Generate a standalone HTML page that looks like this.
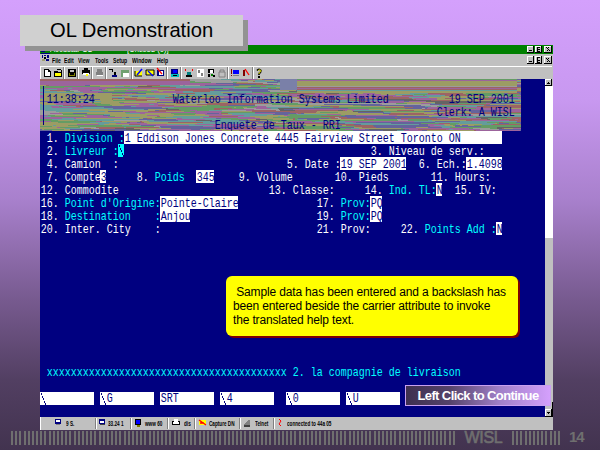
<!DOCTYPE html>
<html><head><meta charset="utf-8">
<style>
*{margin:0;padding:0;box-sizing:border-box}
html,body{width:600px;height:450px;overflow:hidden}
body{position:relative;background:linear-gradient(to bottom,#d4a0fc 0px,#c898f0 100px,#a880cc 200px,#775a8f 300px,#523f62 380px,#42334f 450px);font-family:"Liberation Sans",sans-serif}
.a{position:absolute}
#term{position:absolute;left:40px;top:79px;width:505px;height:338px;background:#000080;overflow:hidden}
.t{position:absolute;height:13px;overflow:visible;white-space:pre}
.t span{display:block;font-family:"Liberation Mono",monospace;font-size:13.5px;line-height:13px;transform:translate(0.8px,0.5px) scaleX(0.74066);transform-origin:0 0;white-space:pre}
.w{color:#fff}.c{color:#00ffff}.n{color:#000080}
.f{background:#fff;color:#000080}
.fc{background:#00ffff;color:#000080}
.mn{position:absolute;top:56px;font-size:8px;line-height:9px;color:#000;font-weight:bold;transform:scaleX(0.64);transform-origin:0 0}
.sep{position:absolute;top:67px;width:2px;height:12px;border-left:1px solid #808080;border-right:1px solid #fff}
.ic{position:absolute}
.tb{position:absolute;top:418px;height:12px;border-left:1px solid #fff}
.tt{position:absolute;top:418.5px;font-size:7.5px;line-height:9px;color:#000;font-weight:bold;transform:scaleX(0.62);transform-origin:0 0;white-space:pre}
.stripes{position:absolute;top:431px;height:14px;background:repeating-linear-gradient(to right,#6f6f6f 0,#6f6f6f 2.08px,transparent 2.08px,transparent 4.1667px)}
</style></head><body>
<!-- window frame -->
<div class="a" style="left:40px;top:45px;width:513px;height:385px;background:#c0c0c0"></div>
<div class="a" style="left:40px;top:45px;width:513px;height:9px;background:#008000"></div>
<div class="a" style="left:50px;top:44.5px;font-size:9px;line-height:9px;color:#fff;white-space:pre;transform:scaleX(0.85);transform-origin:0 0">Accustar OL -</div><div class="a" style="left:127px;top:44.5px;font-size:9px;line-height:9px;color:#fff;white-space:pre;transform:scaleX(0.85);transform-origin:0 0">[Untitled (0)]</div>
<!-- title bar buttons -->
<svg class="a" style="left:527px;top:46px" width="25" height="7" shape-rendering="crispEdges">
<g><rect x="0" y="0" width="7" height="7" fill="#000"/><rect x="0" y="0" width="6" height="6" fill="#fff"/><rect x="1" y="1" width="5" height="5" fill="#c0c0c0"/><rect x="2" y="4" width="3" height="1" fill="#000"/></g>
<g transform="translate(8,0)"><rect x="0" y="0" width="7" height="7" fill="#000"/><rect x="0" y="0" width="6" height="6" fill="#fff"/><rect x="1" y="1" width="5" height="5" fill="#c0c0c0"/><path d="M2 1h3v1h-2v1h2v1h-2v1h2v1h-3z" fill="#000"/></g>
<g transform="translate(17,0)"><rect x="0" y="0" width="8" height="7" fill="#000"/><rect x="0" y="0" width="7" height="6" fill="#fff"/><rect x="1" y="1" width="6" height="5" fill="#c0c0c0"/><path d="M2 1h1v1h1v-1h1v1h-1v1h1v1h1v1h-1v-1h-1v1h-1v-1h1v-1h-1v-1h-1z" fill="#000"/></g>
</svg>
<!-- menubar -->
<svg class="a" style="left:41px;top:51px" width="9" height="12" shape-rendering="crispEdges"><rect x="0" y="0" width="4" height="1" fill="#000080"/><rect x="0" y="2" width="9" height="1" fill="#000080"/><rect x="1" y="4" width="1" height="3" fill="#000080"/><rect x="3" y="4" width="2" height="1" fill="#000080"/><rect x="6" y="4" width="2" height="3" fill="#000080"/><rect x="3" y="6" width="2" height="2" fill="#000"/><rect x="1" y="8" width="3" height="2" fill="#a0a070"/><rect x="5" y="8" width="3" height="2" fill="#000080"/></svg>
<div class="mn" style="left:52px">File</div>
<div class="mn" style="left:64px">Edit</div>
<div class="mn" style="left:78px">View</div>
<div class="mn" style="left:95px">Tools</div>
<div class="mn" style="left:113px">Setup</div>
<div class="mn" style="left:132px">Window</div>
<div class="mn" style="left:157px">Help</div>
<svg class="a" style="left:527px;top:56px" width="25" height="8" shape-rendering="crispEdges">
<g><rect x="0" y="0" width="7" height="8" fill="#000"/><rect x="0" y="0" width="6" height="7" fill="#fff"/><rect x="1" y="1" width="5" height="6" fill="#c0c0c0"/><rect x="2" y="5" width="3" height="1" fill="#000"/></g>
<g transform="translate(8,0)"><rect x="0" y="0" width="7" height="8" fill="#000"/><rect x="0" y="0" width="6" height="7" fill="#fff"/><rect x="1" y="1" width="5" height="6" fill="#c0c0c0"/><path d="M2 1h3v1h-2v2h2v1h-2v1h2v1h-3z" fill="#000"/></g>
<g transform="translate(17,0)"><rect x="0" y="0" width="8" height="8" fill="#000"/><rect x="0" y="0" width="7" height="7" fill="#fff"/><rect x="1" y="1" width="6" height="6" fill="#c0c0c0"/><path d="M2 2h1v1h1v-1h1v1h-1v1h1v1h1v1h-1v-1h-1v1h-1v-1h1v-1h-1v-1h-1z" fill="#000"/></g>
</svg>
<div class="a" style="left:40px;top:66px;width:512px;height:1px;background:#fff"></div>
<!-- toolbar -->
<svg class="a" style="left:40px;top:67px" width="513" height="12" shape-rendering="crispEdges">
<rect x="0" y="0" width="1" height="12" fill="#fff"/>
<g fill="#fff"><rect x="24" y="0" width="1" height="12"/><rect x="38" y="0" width="1" height="12"/><rect x="52" y="0" width="1" height="12"/><rect x="66" y="0" width="1" height="12"/><rect x="92" y="0" width="1" height="12"/><rect x="127" y="0" width="1" height="12"/><rect x="141" y="0" width="1" height="12"/><rect x="188" y="0" width="1" height="12"/><rect x="213" y="0" width="1" height="12"/></g>
<g fill="#808080"><rect x="23" y="0" width="1" height="12"/><rect x="37" y="0" width="1" height="12"/><rect x="51" y="0" width="1" height="12"/><rect x="65" y="0" width="1" height="12"/><rect x="91" y="0" width="1" height="12"/><rect x="126" y="0" width="1" height="12"/><rect x="140" y="0" width="1" height="12"/><rect x="187" y="0" width="1" height="12"/><rect x="212" y="0" width="1" height="12"/></g>
<!-- new -->
<path d="M4 2h5v1h1v1h1v6h-7z" fill="#000"/><path d="M5 3h3v2h2v4h-5z" fill="#fff"/>
<!-- open -->
<rect x="14" y="4" width="4" height="1" fill="#000"/><rect x="14" y="5" width="8" height="5" fill="#000"/><rect x="15" y="6" width="6" height="3" fill="#ffff00"/><rect x="17" y="2" width="4" height="1" fill="#000"/><rect x="21" y="3" width="1" height="2" fill="#000"/>
<!-- save -->
<rect x="28" y="2" width="8" height="8" fill="#000"/><rect x="30" y="3" width="4" height="2" fill="#c0c0c0"/><rect x="29" y="6" width="6" height="3" fill="#808000"/><rect x="30" y="6" width="4" height="2" fill="#000"/>
<!-- print -->
<rect x="42" y="3" width="8" height="4" fill="#000"/><rect x="44" y="1" width="4" height="2" fill="#000"/><rect x="43" y="6" width="6" height="2" fill="#fff"/><rect x="46" y="7" width="2" height="2" fill="#ffff00"/>
<!-- gray -->
<rect x="57" y="2" width="5" height="3" fill="#808080"/><rect x="56" y="5" width="7" height="3" fill="#808080"/><rect x="57" y="8" width="6" height="1" fill="#fff"/>
<!-- connect -->
<rect x="69" y="2" width="4" height="1" fill="#000"/><rect x="72" y="3" width="1" height="2" fill="#000"/><rect x="74" y="5" width="2" height="3" fill="#000"/><rect x="72" y="8" width="5" height="2" fill="#000080"/>
<!-- green -->
<rect x="81" y="3" width="8" height="3" fill="#70a070"/><rect x="81" y="6" width="8" height="4" fill="#fff"/><rect x="81" y="6" width="2" height="4" fill="#70a070"/>
<!-- yellow blue -->
<rect x="95" y="4" width="7" height="5" fill="#ffff00"/><path d="M95 4v5h7" fill="none" stroke="#000" shape-rendering="auto"/><path d="M97 8l5-6" stroke="#0000ff" stroke-width="1.5" shape-rendering="auto"/>
<!-- yellow folder diag -->
<rect x="106" y="3" width="8" height="5" fill="#ffff00"/><path d="M106 3h8v5h-8z" fill="none" stroke="#000" shape-rendering="auto"/><path d="M108 4l5 5" stroke="#0000ff" stroke-width="1.2" shape-rendering="auto"/>
<!-- blue red -->
<rect x="117" y="3" width="7" height="6" fill="#000080"/><rect x="119" y="4" width="4" height="4" fill="#fff"/><path d="M117 1l5 6" stroke="#ff0000" stroke-width="1.2" shape-rendering="auto"/>
<!-- monitor -->
<rect x="131" y="2" width="7" height="6" fill="#000080"/><rect x="133" y="3" width="4" height="3" fill="#0000ff"/><rect x="131" y="7" width="8" height="3" fill="#00c0c0"/><rect x="133" y="8" width="4" height="1" fill="#000"/>
<!-- red corners -->
<rect x="145" y="2" width="1" height="2" fill="#ff0000"/><rect x="152" y="2" width="1" height="2" fill="#ff0000"/><rect x="147" y="5" width="4" height="3" fill="#008080"/><rect x="146" y="8" width="6" height="2" fill="#000"/>
<!-- white floppy -->
<rect x="157" y="2" width="7" height="8" fill="#fff"/><rect x="158" y="3" width="2" height="3" fill="#808080"/><rect x="161" y="6" width="2" height="3" fill="#808080"/>
<!-- black white green -->
<rect x="168" y="2" width="6" height="4" fill="#000"/><rect x="170" y="3" width="3" height="3" fill="#fff"/><rect x="168" y="7" width="2" height="3" fill="#000"/><rect x="171" y="7" width="2" height="2" fill="#008000"/><rect x="173" y="8" width="2" height="2" fill="#000"/>
<!-- gray lock -->
<path d="M179 5h6v5h-6z M180 5v-2h4v2" fill="none" stroke="#808080" shape-rendering="auto"/>
<!-- red ! blue -->
<rect x="191" y="2" width="1" height="5" fill="#800000"/><rect x="191" y="8" width="1" height="1" fill="#800000"/><rect x="193" y="3" width="6" height="4" fill="#0000ff"/><rect x="193" y="8" width="6" height="1" fill="#808080"/>
<!-- dark red -->
<rect x="203" y="3" width="2" height="6" fill="#800000"/><path d="M205 2l4 6" stroke="#ff0000" stroke-width="1.3" shape-rendering="auto"/>
<!-- ? -->
<path d="M217 3.5q2-2.5 4 0q0 2-2 3v1.5" fill="none" stroke="#000" stroke-width="1.6" shape-rendering="auto"/><path d="M218 3.5q1.5-1.5 3 0q0 1.5-2 2.5v1" fill="none" stroke="#ffff00" stroke-width="0.8" shape-rendering="auto"/><rect x="218" y="9" width="2" height="2" fill="#000"/>
</svg>

<div id="term">
<svg class="a" style="left:0;top:0" width="481" height="52" shape-rendering="crispEdges">
<path fill="#9c649c" d="M95 0h20v1h-20zM199 0h18v1h-18zM409 0h7v1h-7zM72 1h55v1h-55zM133 1h2v1h-2zM0 2h5v1h-5zM89 3h3v1h-3zM451 3h4v1h-4zM104 4h72v1h-72zM380 4h25v1h-25zM460 4h8v1h-8zM0 5h12v1h-12zM124 5h12v1h-12zM150 5h43v1h-43zM233 5h4v1h-4zM262 5h9v1h-9zM380 5h39v1h-39zM427 5h54v1h-54zM9 6h36v1h-36zM160 6h5v1h-5zM257 6h31v1h-31zM403 6h28v1h-28zM221 7h5v1h-5zM335 7h2v1h-2zM349 7h12v1h-12zM24 8h73v1h-73zM253 8h2v1h-2zM450 8h10v1h-10zM5 9h23v1h-23zM32 9h35v1h-35zM95 9h74v1h-74zM183 9h10v1h-10zM276 9h5v1h-5zM440 9h30v1h-30zM17 10h42v1h-42zM62 10h3v1h-3zM406 10h18v1h-18zM467 10h3v1h-3zM38 11h12v1h-12zM86 11h21v1h-21zM285 11h14v1h-14zM343 11h9v1h-9zM362 11h30v1h-30zM401 11h15v1h-15zM40 12h23v1h-23zM111 12h8v1h-8zM123 12h20v1h-20zM285 12h10v1h-10zM304 12h29v1h-29zM358 12h8v1h-8zM0 13h4v1h-4zM43 13h15v1h-15zM114 13h29v1h-29zM313 13h22v1h-22zM85 14h7v1h-7zM206 14h17v1h-17zM275 14h9v1h-9zM323 14h12v1h-12zM212 15h22v1h-22zM248 15h38v1h-38zM297 15h44v1h-44zM387 15h13v1h-13zM0 16h15v1h-15zM82 16h6v1h-6zM223 16h6v1h-6zM252 16h5v1h-5zM273 16h58v1h-58zM333 16h23v1h-23zM477 16h4v1h-4zM0 17h17v1h-17zM175 17h30v1h-30zM241 17h25v1h-25zM276 17h18v1h-18zM305 17h27v1h-27zM353 17h34v1h-34zM0 18h28v1h-28zM106 18h9v1h-9zM184 18h19v1h-19zM289 18h40v1h-40zM333 18h9v1h-9zM449 18h32v1h-32zM17 19h9v1h-9zM56 19h5v1h-5zM64 19h3v1h-3zM200 19h27v1h-27zM374 19h23v1h-23zM478 19h3v1h-3zM23 20h15v1h-15zM119 20h28v1h-28zM302 20h5v1h-5zM376 20h21v1h-21zM120 21h24v1h-24zM240 22h7v1h-7zM330 22h34v1h-34zM369 22h17v1h-17zM8 23h16v1h-16zM338 23h26v1h-26zM14 24h38v1h-38zM80 24h38v1h-38zM381 24h10v1h-10zM446 24h4v1h-4zM16 25h39v1h-39zM99 25h10v1h-10zM114 25h11v1h-11zM340 25h2v1h-2zM41 26h2v1h-2zM84 26h34v1h-34zM11 27h8v1h-8zM96 27h66v1h-66zM217 27h9v1h-9zM12 28h31v1h-31zM214 28h13v1h-13zM388 28h53v1h-53zM216 29h15v1h-15zM387 29h34v1h-34zM436 29h28v1h-28zM188 30h26v1h-26zM253 30h76v1h-76zM398 30h83v1h-83zM150 31h7v1h-7zM206 31h6v1h-6zM305 31h2v1h-2zM312 31h2v1h-2zM467 31h14v1h-14zM83 32h13v1h-13zM155 32h27v1h-27zM410 32h6v1h-6zM456 32h25v1h-25zM90 33h91v1h-91zM10 34h12v1h-12zM100 34h5v1h-5zM156 34h11v1h-11zM179 34h2v1h-2zM215 34h20v1h-20zM256 34h2v1h-2zM165 35h17v1h-17zM287 35h14v1h-14zM387 35h28v1h-28zM0 36h8v1h-8zM45 36h18v1h-18zM107 36h12v1h-12zM169 36h35v1h-35zM244 36h6v1h-6zM316 36h41v1h-41zM402 36h31v1h-31zM0 37h3v1h-3zM47 37h21v1h-21zM0 38h82v1h-82zM163 38h52v1h-52zM0 39h22v1h-22zM34 39h2v1h-2zM137 39h5v1h-5zM198 39h22v1h-22zM327 39h9v1h-9zM397 39h14v1h-14zM420 39h21v1h-21zM136 40h29v1h-29zM361 40h7v1h-7zM475 40h3v1h-3zM154 41h2v1h-2zM432 41h37v1h-37zM0 42h11v1h-11zM56 42h4v1h-4zM250 42h22v1h-22zM305 42h69v1h-69zM90 43h7v1h-7zM255 43h43v1h-43zM313 43h3v1h-3zM76 44h31v1h-31zM211 44h14v1h-14zM37 45h22v1h-22zM100 45h27v1h-27zM155 45h53v1h-53zM388 45h16v1h-16zM451 45h2v1h-2zM116 46h33v1h-33zM173 46h40v1h-40zM225 46h4v1h-4zM253 46h7v1h-7zM388 46h6v1h-6zM163 47h29v1h-29zM390 47h11v1h-11zM17 48h3v1h-3zM215 48h38v1h-38zM291 48h7v1h-7zM175 49h25v1h-25zM363 49h66v1h-66zM473 49h8v1h-8zM100 50h9v1h-9zM116 50h35v1h-35zM171 50h3v1h-3zM185 50h38v1h-38zM305 50h20v1h-20zM369 50h9v1h-9zM406 50h3v1h-3zM413 50h27v1h-27zM139 51h43v1h-43zM219 51h4v1h-4zM364 51h18v1h-18zM436 51h44v1h-44z"/>
<path fill="#9c9c64" d="M89 0h3v1h-3zM217 0h5v1h-5zM261 0h11v1h-11zM401 0h8v1h-8zM52 1h17v1h-17zM135 1h15v1h-15zM208 1h7v1h-7zM225 1h9v1h-9zM241 1h3v1h-3zM357 1h23v1h-23zM439 1h2v1h-2zM462 1h19v1h-19zM92 3h16v1h-16zM197 3h11v1h-11zM293 3h25v1h-25zM403 3h21v1h-21zM323 4h54v1h-54zM405 4h28v1h-28zM12 5h6v1h-6zM40 5h31v1h-31zM85 5h13v1h-13zM419 5h8v1h-8zM0 6h6v1h-6zM50 6h57v1h-57zM60 7h15v1h-15zM194 7h17v1h-17zM409 7h35v1h-35zM236 8h17v1h-17zM298 8h50v1h-50zM351 8h17v1h-17zM388 8h18v1h-18zM412 8h35v1h-35zM251 9h25v1h-25zM349 9h11v1h-11zM415 9h10v1h-10zM470 9h11v1h-11zM65 10h23v1h-23zM93 10h25v1h-25zM337 10h5v1h-5zM470 10h11v1h-11zM5 11h5v1h-5zM68 11h6v1h-6zM107 11h4v1h-4zM117 11h18v1h-18zM240 11h16v1h-16zM282 11h3v1h-3zM392 11h9v1h-9zM416 11h65v1h-65zM17 12h9v1h-9zM119 12h4v1h-4zM387 12h88v1h-88zM181 13h15v1h-15zM49 14h11v1h-11zM106 14h27v1h-27zM284 14h2v1h-2zM318 14h5v1h-5zM335 14h35v1h-35zM423 14h3v1h-3zM70 15h61v1h-61zM234 15h14v1h-14zM341 15h14v1h-14zM128 16h27v1h-27zM161 16h17v1h-17zM356 16h6v1h-6zM70 17h20v1h-20zM301 17h4v1h-4zM401 17h47v1h-47zM53 18h4v1h-4zM85 18h21v1h-21zM147 18h37v1h-37zM249 18h10v1h-10zM329 18h4v1h-4zM389 18h38v1h-38zM26 19h24v1h-24zM97 19h22v1h-22zM227 19h9v1h-9zM397 19h8v1h-8zM0 20h3v1h-3zM38 20h17v1h-17zM67 20h3v1h-3zM73 20h12v1h-12zM280 20h9v1h-9zM397 20h40v1h-40zM0 21h8v1h-8zM47 21h26v1h-26zM115 21h5v1h-5zM226 21h20v1h-20zM414 21h67v1h-67zM61 22h117v1h-117zM480 22h1v1h-1zM0 23h8v1h-8zM32 23h47v1h-47zM84 23h33v1h-33zM144 23h47v1h-47zM364 23h31v1h-31zM0 24h14v1h-14zM61 24h19v1h-19zM118 24h18v1h-18zM367 24h14v1h-14zM2 25h14v1h-14zM70 25h29v1h-29zM125 25h32v1h-32zM450 25h31v1h-31zM72 26h12v1h-12zM134 26h33v1h-33zM245 26h68v1h-68zM249 27h24v1h-24zM299 27h65v1h-65zM122 28h3v1h-3zM194 28h2v1h-2zM203 28h4v1h-4zM467 29h14v1h-14zM33 30h35v1h-35zM108 30h18v1h-18zM329 30h53v1h-53zM49 31h66v1h-66zM307 31h5v1h-5zM341 31h16v1h-16zM374 31h17v1h-17zM410 31h8v1h-8zM65 32h3v1h-3zM96 32h12v1h-12zM126 32h18v1h-18zM182 32h30v1h-30zM277 32h36v1h-36zM405 32h5v1h-5zM416 32h13v1h-13zM19 33h66v1h-66zM276 33h4v1h-4zM298 33h20v1h-20zM351 33h54v1h-54zM414 33h17v1h-17zM47 34h39v1h-39zM105 34h26v1h-26zM264 34h79v1h-79zM384 34h10v1h-10zM70 35h64v1h-64zM155 35h10v1h-10zM182 35h10v1h-10zM301 35h48v1h-48zM15 36h30v1h-30zM70 36h37v1h-37zM119 36h50v1h-50zM227 36h17v1h-17zM357 36h45v1h-45zM44 37h3v1h-3zM75 37h42v1h-42zM120 37h13v1h-13zM210 37h28v1h-28zM240 37h7v1h-7zM389 37h3v1h-3zM100 38h15v1h-15zM160 38h3v1h-3zM215 38h18v1h-18zM408 38h12v1h-12zM36 39h67v1h-67zM112 39h25v1h-25zM220 39h29v1h-29zM208 40h8v1h-8zM233 40h20v1h-20zM264 40h3v1h-3zM279 40h45v1h-45zM18 41h16v1h-16zM220 41h10v1h-10zM392 41h34v1h-34zM62 42h38v1h-38zM102 42h7v1h-7zM232 42h6v1h-6zM0 43h18v1h-18zM81 43h6v1h-6zM104 43h24v1h-24zM200 43h18v1h-18zM0 44h58v1h-58zM69 44h7v1h-7zM107 44h50v1h-50zM182 44h5v1h-5zM207 44h4v1h-4zM455 44h2v1h-2zM0 45h37v1h-37zM64 45h25v1h-25zM208 45h78v1h-78zM404 45h6v1h-6zM418 45h24v1h-24zM0 46h13v1h-13zM16 46h12v1h-12zM266 46h26v1h-26zM297 46h2v1h-2zM302 46h4v1h-4zM405 46h8v1h-8zM420 46h2v1h-2zM428 46h6v1h-6zM12 47h26v1h-26zM412 47h3v1h-3zM0 48h17v1h-17zM314 48h8v1h-8zM376 48h12v1h-12zM0 49h25v1h-25zM51 49h3v1h-3zM94 49h37v1h-37zM319 49h42v1h-42zM464 49h9v1h-9zM2 50h2v1h-2zM24 50h6v1h-6zM109 50h7v1h-7zM174 50h11v1h-11zM237 50h54v1h-54zM12 51h30v1h-30zM182 51h17v1h-17zM278 51h21v1h-21zM387 51h47v1h-47z"/>
<path fill="#9c6464" d="M11 0h43v1h-43zM222 0h2v1h-2zM416 0h56v1h-56zM42 1h10v1h-10zM244 1h16v1h-16zM429 1h10v1h-10zM441 1h21v1h-21zM213 2h2v1h-2zM434 2h38v1h-38zM335 3h31v1h-31zM455 3h26v1h-26zM87 4h17v1h-17zM196 4h27v1h-27zM216 5h12v1h-12zM307 5h5v1h-5zM6 6h3v1h-3zM107 6h13v1h-13zM288 6h11v1h-11zM354 6h33v1h-33zM97 8h39v1h-39zM255 8h17v1h-17zM477 8h4v1h-4zM228 9h3v1h-3zM295 9h9v1h-9zM406 9h9v1h-9zM118 10h57v1h-57zM297 10h27v1h-27zM10 11h14v1h-14zM135 11h39v1h-39zM299 11h30v1h-30zM153 12h17v1h-17zM475 12h6v1h-6zM387 13h53v1h-53zM450 13h24v1h-24zM92 14h4v1h-4zM136 14h19v1h-19zM237 14h38v1h-38zM388 14h35v1h-35zM468 14h11v1h-11zM26 15h19v1h-19zM286 15h11v1h-11zM400 15h26v1h-26zM31 16h35v1h-35zM70 16h12v1h-12zM249 16h3v1h-3zM362 16h11v1h-11zM405 16h36v1h-36zM61 17h9v1h-9zM332 17h21v1h-21zM49 18h4v1h-4zM125 18h12v1h-12zM259 18h30v1h-30zM342 18h27v1h-27zM50 19h6v1h-6zM67 19h11v1h-11zM84 19h13v1h-13zM149 19h30v1h-30zM257 19h4v1h-4zM278 19h94v1h-94zM405 19h14v1h-14zM433 19h25v1h-25zM55 20h6v1h-6zM70 20h3v1h-3zM85 20h34v1h-34zM289 20h13v1h-13zM373 20h3v1h-3zM437 20h15v1h-15zM96 21h11v1h-11zM251 21h4v1h-4zM310 21h11v1h-11zM346 21h2v1h-2zM391 21h23v1h-23zM247 22h14v1h-14zM319 22h9v1h-9zM475 22h5v1h-5zM24 23h4v1h-4zM134 23h10v1h-10zM261 23h32v1h-32zM136 24h12v1h-12zM167 24h61v1h-61zM157 25h58v1h-58zM402 25h48v1h-48zM23 26h18v1h-18zM43 26h14v1h-14zM118 26h16v1h-16zM180 26h8v1h-8zM444 26h2v1h-2zM466 26h15v1h-15zM36 27h4v1h-4zM290 27h9v1h-9zM437 27h44v1h-44zM293 28h6v1h-6zM345 28h28v1h-28zM441 28h40v1h-40zM174 29h18v1h-18zM174 30h6v1h-6zM382 30h16v1h-16zM119 31h22v1h-22zM212 31h24v1h-24zM255 31h43v1h-43zM303 31h2v1h-2zM357 31h17v1h-17zM400 31h10v1h-10zM108 32h18v1h-18zM212 32h65v1h-65zM250 33h26v1h-26zM405 33h7v1h-7zM441 33h40v1h-40zM181 34h7v1h-7zM258 34h3v1h-3zM350 34h34v1h-34zM394 34h63v1h-63zM349 35h15v1h-15zM368 35h19v1h-19zM117 37h3v1h-3zM169 37h29v1h-29zM281 37h20v1h-20zM290 38h5v1h-5zM299 38h8v1h-8zM355 38h2v1h-2zM467 38h14v1h-14zM107 39h5v1h-5zM253 39h2v1h-2zM291 39h7v1h-7zM301 39h26v1h-26zM361 39h36v1h-36zM411 39h9v1h-9zM472 39h9v1h-9zM253 40h2v1h-2zM324 40h10v1h-10zM390 40h57v1h-57zM461 40h14v1h-14zM478 40h3v1h-3zM210 41h10v1h-10zM426 41h6v1h-6zM469 41h12v1h-12zM60 42h2v1h-2zM100 42h2v1h-2zM477 42h4v1h-4zM101 43h3v1h-3zM128 43h35v1h-35zM459 43h4v1h-4zM225 44h71v1h-71zM399 44h11v1h-11zM89 45h11v1h-11zM286 45h28v1h-28zM453 45h28v1h-28zM306 46h27v1h-27zM315 47h19v1h-19zM56 48h28v1h-28zM86 48h33v1h-33zM190 48h25v1h-25zM322 48h14v1h-14zM44 49h7v1h-7zM59 49h16v1h-16zM200 49h63v1h-63zM462 49h2v1h-2zM378 50h28v1h-28zM199 51h20v1h-20zM244 51h32v1h-32zM434 51h2v1h-2z"/>
<path fill="#649c9c" d="M0 0h11v1h-11zM54 0h18v1h-18zM181 0h18v1h-18zM235 0h13v1h-13zM0 1h2v1h-2zM69 1h3v1h-3zM191 1h10v1h-10zM215 1h10v1h-10zM260 1h53v1h-53zM380 1h49v1h-49zM69 2h18v1h-18zM215 2h22v1h-22zM472 2h9v1h-9zM0 3h17v1h-17zM108 3h21v1h-21zM238 3h35v1h-35zM318 3h5v1h-5zM0 4h21v1h-21zM79 4h8v1h-8zM241 4h44v1h-44zM377 4h3v1h-3zM18 5h22v1h-22zM98 5h26v1h-26zM242 5h20v1h-20zM271 5h23v1h-23zM312 5h9v1h-9zM325 5h17v1h-17zM120 6h20v1h-20zM143 6h2v1h-2zM249 6h8v1h-8zM75 7h9v1h-9zM90 7h8v1h-8zM130 7h64v1h-64zM226 7h19v1h-19zM361 7h48v1h-48zM136 8h59v1h-59zM368 8h20v1h-20zM474 8h3v1h-3zM28 9h4v1h-4zM193 9h35v1h-35zM304 9h3v1h-3zM368 9h38v1h-38zM425 9h15v1h-15zM0 10h17v1h-17zM88 10h5v1h-5zM399 10h7v1h-7zM424 10h43v1h-43zM0 11h5v1h-5zM52 11h9v1h-9zM111 11h6v1h-6zM0 12h17v1h-17zM143 12h10v1h-10zM170 12h42v1h-42zM259 12h26v1h-26zM333 12h25v1h-25zM366 12h21v1h-21zM4 13h39v1h-39zM143 13h38v1h-38zM196 13h16v1h-16zM335 13h52v1h-52zM0 14h49v1h-49zM155 14h28v1h-28zM370 14h18v1h-18zM0 15h26v1h-26zM45 15h19v1h-19zM131 15h67v1h-67zM355 15h19v1h-19zM15 16h16v1h-16zM88 16h40v1h-40zM155 16h6v1h-6zM178 16h45v1h-45zM373 16h10v1h-10zM385 16h20v1h-20zM28 17h33v1h-33zM90 17h2v1h-2zM98 17h31v1h-31zM205 17h36v1h-36zM294 17h7v1h-7zM387 17h14v1h-14zM28 18h21v1h-21zM57 18h28v1h-28zM115 18h10v1h-10zM224 18h25v1h-25zM369 18h20v1h-20zM0 19h17v1h-17zM61 19h3v1h-3zM82 19h2v1h-2zM119 19h22v1h-22zM236 19h5v1h-5zM372 19h2v1h-2zM426 19h7v1h-7zM3 20h20v1h-20zM61 20h6v1h-6zM147 20h14v1h-14zM461 20h20v1h-20zM8 21h39v1h-39zM290 21h17v1h-17zM330 21h16v1h-16zM31 22h30v1h-30zM178 22h28v1h-28zM292 22h27v1h-27zM191 23h21v1h-21zM453 23h28v1h-28zM391 24h4v1h-4zM0 25h2v1h-2zM109 25h5v1h-5zM0 26h23v1h-23zM399 26h45v1h-45zM0 27h11v1h-11zM22 27h14v1h-14zM91 27h5v1h-5zM273 27h8v1h-8zM385 27h6v1h-6zM426 27h11v1h-11zM0 28h12v1h-12zM43 28h21v1h-21zM125 28h9v1h-9zM227 28h47v1h-47zM0 29h73v1h-73zM231 29h7v1h-7zM0 30h33v1h-33zM68 30h36v1h-36zM5 31h44v1h-44zM169 31h13v1h-13zM314 31h27v1h-27zM391 31h9v1h-9zM16 32h49v1h-49zM344 33h7v1h-7zM412 33h2v1h-2zM439 33h2v1h-2zM86 34h14v1h-14zM188 34h27v1h-27zM64 35h6v1h-6zM192 35h41v1h-41zM257 35h30v1h-30zM415 35h16v1h-16zM204 36h23v1h-23zM454 36h27v1h-27zM3 37h8v1h-8zM133 37h36v1h-36zM198 37h12v1h-12zM238 37h2v1h-2zM392 37h89v1h-89zM82 38h4v1h-4zM89 38h11v1h-11zM126 38h34v1h-34zM427 38h9v1h-9zM22 39h12v1h-12zM142 39h34v1h-34zM12 40h87v1h-87zM165 40h26v1h-26zM257 40h7v1h-7zM38 41h36v1h-36zM107 41h7v1h-7zM138 41h16v1h-16zM172 41h27v1h-27zM388 41h4v1h-4zM109 42h61v1h-61zM178 42h27v1h-27zM275 42h30v1h-30zM374 42h21v1h-21zM420 42h57v1h-57zM50 43h31v1h-31zM163 43h37v1h-37zM223 43h5v1h-5zM298 43h15v1h-15zM395 43h52v1h-52zM58 44h11v1h-11zM157 44h25v1h-25zM187 44h20v1h-20zM305 44h46v1h-46zM419 44h36v1h-36zM59 45h5v1h-5zM127 45h28v1h-28zM321 45h58v1h-58zM416 45h2v1h-2zM442 45h9v1h-9zM13 46h3v1h-3zM82 46h19v1h-19zM149 46h24v1h-24zM295 46h2v1h-2zM394 46h11v1h-11zM401 47h11v1h-11zM84 48h2v1h-2zM119 48h2v1h-2zM402 48h8v1h-8zM25 49h19v1h-19zM311 49h8v1h-8zM409 50h4v1h-4zM276 51h2v1h-2zM357 51h7v1h-7z"/>
<path fill="#649c64" d="M72 0h17v1h-17zM248 0h13v1h-13zM370 0h31v1h-31zM91 2h64v1h-64zM370 2h64v1h-64zM52 3h22v1h-22zM129 3h42v1h-42zM193 3h4v1h-4zM424 3h27v1h-27zM60 4h14v1h-14zM433 4h27v1h-27zM468 4h4v1h-4zM199 6h50v1h-50zM317 6h37v1h-37zM431 6h40v1h-40zM0 7h60v1h-60zM84 7h6v1h-6zM112 7h18v1h-18zM211 7h10v1h-10zM332 7h3v1h-3zM337 7h12v1h-12zM444 7h26v1h-26zM0 8h24v1h-24zM195 8h13v1h-13zM220 8h16v1h-16zM348 8h3v1h-3zM447 8h3v1h-3zM460 8h14v1h-14zM0 9h5v1h-5zM67 9h28v1h-28zM231 9h20v1h-20zM281 9h7v1h-7zM175 10h14v1h-14zM279 10h18v1h-18zM61 11h7v1h-7zM74 11h12v1h-12zM336 11h7v1h-7zM26 12h8v1h-8zM63 12h48v1h-48zM295 12h9v1h-9zM98 13h16v1h-16zM212 13h78v1h-78zM299 13h14v1h-14zM440 13h10v1h-10zM62 14h23v1h-23zM223 14h14v1h-14zM299 14h12v1h-12zM426 14h38v1h-38zM64 15h6v1h-6zM374 15h13v1h-13zM426 15h54v1h-54zM66 16h4v1h-4zM229 16h20v1h-20zM269 16h4v1h-4zM331 16h2v1h-2zM383 16h2v1h-2zM441 16h36v1h-36zM17 17h11v1h-11zM129 17h46v1h-46zM468 17h13v1h-13zM137 18h10v1h-10zM427 18h22v1h-22zM307 20h13v1h-13zM452 20h9v1h-9zM73 21h23v1h-23zM216 21h5v1h-5zM307 21h3v1h-3zM458 22h17v1h-17zM79 23h5v1h-5zM293 23h45v1h-45zM52 24h9v1h-9zM228 24h30v1h-30zM356 24h11v1h-11zM418 24h28v1h-28zM55 25h15v1h-15zM232 25h35v1h-35zM57 26h15v1h-15zM167 26h13v1h-13zM313 26h8v1h-8zM19 27h3v1h-3zM162 27h55v1h-55zM397 27h29v1h-29zM134 28h60v1h-60zM196 28h7v1h-7zM207 28h7v1h-7zM274 28h19v1h-19zM299 28h46v1h-46zM128 29h46v1h-46zM192 29h12v1h-12zM308 29h57v1h-57zM421 29h15v1h-15zM139 30h35v1h-35zM180 30h8v1h-8zM141 31h9v1h-9zM157 31h12v1h-12zM144 32h11v1h-11zM343 32h41v1h-41zM85 33h5v1h-5zM181 33h34v1h-34zM280 33h18v1h-18zM22 34h11v1h-11zM131 34h25v1h-25zM466 34h15v1h-15zM23 35h41v1h-41zM134 35h21v1h-21zM248 35h9v1h-9zM8 36h7v1h-7zM250 36h55v1h-55zM11 37h33v1h-33zM68 37h7v1h-7zM247 37h34v1h-34zM115 38h11v1h-11zM233 38h57v1h-57zM420 38h7v1h-7zM181 39h17v1h-17zM249 39h4v1h-4zM255 39h3v1h-3zM289 39h2v1h-2zM448 39h24v1h-24zM0 40h12v1h-12zM191 40h17v1h-17zM227 40h6v1h-6zM255 40h2v1h-2zM334 40h23v1h-23zM368 40h22v1h-22zM450 40h11v1h-11zM0 41h18v1h-18zM34 41h4v1h-4zM230 41h128v1h-128zM368 41h20v1h-20zM11 42h45v1h-45zM238 42h12v1h-12zM272 42h3v1h-3zM18 43h32v1h-32zM447 43h12v1h-12zM463 43h13v1h-13zM381 44h18v1h-18zM410 44h9v1h-9zM457 44h2v1h-2zM469 44h11v1h-11zM410 45h6v1h-6zM28 46h54v1h-54zM229 46h24v1h-24zM292 46h3v1h-3zM413 46h2v1h-2zM434 46h47v1h-47zM0 47h12v1h-12zM38 47h76v1h-76zM239 47h76v1h-76zM441 47h40v1h-40zM20 48h20v1h-20zM261 48h30v1h-30zM410 48h47v1h-47zM263 49h48v1h-48zM361 49h2v1h-2zM429 49h4v1h-4zM450 49h7v1h-7zM4 50h20v1h-20zM160 50h11v1h-11zM223 50h14v1h-14zM291 50h14v1h-14zM223 51h21v1h-21zM299 51h14v1h-14z"/>
<path fill="#64649c" d="M92 0h3v1h-3zM224 0h11v1h-11zM472 0h9v1h-9zM201 1h7v1h-7zM234 1h7v1h-7zM347 1h4v1h-4zM5 2h6v1h-6zM87 2h4v1h-4zM237 2h133v1h-133zM34 3h18v1h-18zM74 3h15v1h-15zM227 3h11v1h-11zM273 3h20v1h-20zM323 3h12v1h-12zM366 3h37v1h-37zM40 4h20v1h-20zM74 4h5v1h-5zM176 4h20v1h-20zM71 5h9v1h-9zM193 5h23v1h-23zM228 5h5v1h-5zM342 5h38v1h-38zM45 6h5v1h-5zM165 6h34v1h-34zM471 6h10v1h-10zM245 7h87v1h-87zM470 7h11v1h-11zM208 8h12v1h-12zM406 8h6v1h-6zM169 9h14v1h-14zM307 9h42v1h-42zM360 9h8v1h-8zM59 10h3v1h-3zM189 10h60v1h-60zM328 10h9v1h-9zM342 10h57v1h-57zM24 11h6v1h-6zM50 11h2v1h-2zM174 11h54v1h-54zM256 11h26v1h-26zM329 11h7v1h-7zM212 12h18v1h-18zM58 13h40v1h-40zM290 13h9v1h-9zM474 13h7v1h-7zM60 14h2v1h-2zM96 14h10v1h-10zM183 14h23v1h-23zM311 14h7v1h-7zM464 14h4v1h-4zM479 14h2v1h-2zM198 15h14v1h-14zM480 15h1v1h-1zM92 17h6v1h-6zM215 18h9v1h-9zM78 19h4v1h-4zM141 19h8v1h-8zM179 19h21v1h-21zM261 19h17v1h-17zM419 19h7v1h-7zM458 19h20v1h-20zM161 20h91v1h-91zM274 20h6v1h-6zM320 20h23v1h-23zM221 21h5v1h-5zM273 21h17v1h-17zM321 21h9v1h-9zM348 21h16v1h-16zM0 22h31v1h-31zM261 22h31v1h-31zM328 22h2v1h-2zM364 22h5v1h-5zM28 23h4v1h-4zM117 23h17v1h-17zM450 24h31v1h-31zM284 25h56v1h-56zM390 25h12v1h-12zM188 26h27v1h-27zM321 26h60v1h-60zM446 26h20v1h-20zM40 27h51v1h-51zM281 27h9v1h-9zM364 27h21v1h-21zM64 28h58v1h-58zM373 28h15v1h-15zM73 29h53v1h-53zM259 29h49v1h-49zM365 29h17v1h-17zM385 29h2v1h-2zM104 30h4v1h-4zM244 30h9v1h-9zM115 31h4v1h-4zM418 31h45v1h-45zM68 32h15v1h-15zM384 32h21v1h-21zM429 32h27v1h-27zM215 33h35v1h-35zM318 33h26v1h-26zM431 33h8v1h-8zM33 34h14v1h-14zM167 34h12v1h-12zM235 34h21v1h-21zM261 34h3v1h-3zM343 34h7v1h-7zM233 35h15v1h-15zM364 35h4v1h-4zM63 36h7v1h-7zM305 36h11v1h-11zM301 37h88v1h-88zM86 38h3v1h-3zM307 38h48v1h-48zM357 38h51v1h-51zM103 39h4v1h-4zM176 39h5v1h-5zM258 39h31v1h-31zM336 39h25v1h-25zM99 40h37v1h-37zM267 40h12v1h-12zM114 41h24v1h-24zM199 41h11v1h-11zM170 42h8v1h-8zM205 42h27v1h-27zM395 42h25v1h-25zM87 43h3v1h-3zM97 43h4v1h-4zM218 43h5v1h-5zM228 43h8v1h-8zM246 43h9v1h-9zM316 43h79v1h-79zM476 43h5v1h-5zM300 44h5v1h-5zM351 44h30v1h-30zM459 44h10v1h-10zM480 44h1v1h-1zM314 45h7v1h-7zM379 45h9v1h-9zM101 46h15v1h-15zM260 46h6v1h-6zM299 46h3v1h-3zM333 46h55v1h-55zM415 46h5v1h-5zM422 46h6v1h-6zM120 47h43v1h-43zM192 47h23v1h-23zM217 47h22v1h-22zM334 47h56v1h-56zM415 47h26v1h-26zM121 48h69v1h-69zM298 48h16v1h-16zM336 48h40v1h-40zM388 48h14v1h-14zM131 49h44v1h-44zM0 50h2v1h-2zM30 50h56v1h-56zM151 50h9v1h-9zM325 50h4v1h-4zM365 50h4v1h-4zM459 50h22v1h-22zM0 51h12v1h-12zM42 51h8v1h-8zM75 51h64v1h-64zM313 51h30v1h-30zM382 51h5v1h-5zM480 51h1v1h-1z"/>
<path fill="#9c9c9c" d="M115 0h66v1h-66zM127 1h6v1h-6zM150 1h41v1h-41zM155 2h58v1h-58zM171 3h22v1h-22zM208 3h19v1h-19zM21 4h19v1h-19zM223 4h18v1h-18zM472 4h9v1h-9zM80 5h5v1h-5zM136 5h14v1h-14zM237 5h5v1h-5zM140 6h3v1h-3zM145 6h15v1h-15zM249 10h30v1h-30zM30 11h8v1h-8zM228 11h12v1h-12zM352 11h10v1h-10zM34 12h6v1h-6zM230 12h19v1h-19zM133 14h3v1h-3zM448 17h20v1h-20zM203 18h12v1h-12zM241 19h16v1h-16zM252 20h22v1h-22zM107 21h8v1h-8zM144 21h72v1h-72zM255 21h18v1h-18zM206 22h34v1h-34zM212 23h49v1h-49zM148 24h19v1h-19zM258 24h98v1h-98zM215 25h17v1h-17zM267 25h17v1h-17zM342 25h48v1h-48zM215 26h30v1h-30zM381 26h18v1h-18zM226 27h23v1h-23zM391 27h6v1h-6zM204 29h12v1h-12zM382 29h3v1h-3zM464 29h3v1h-3zM214 30h25v1h-25zM0 31h5v1h-5zM182 31h24v1h-24zM236 31h4v1h-4zM0 32h16v1h-16zM0 33h19v1h-19zM0 34h10v1h-10zM0 35h23v1h-23zM431 35h50v1h-50zM433 36h21v1h-21zM295 38h4v1h-4zM298 39h3v1h-3zM357 40h4v1h-4zM74 41h33v1h-33zM358 41h10v1h-10zM236 43h10v1h-10zM213 46h12v1h-12zM114 47h6v1h-6zM215 47h2v1h-2zM40 48h16v1h-16zM54 49h5v1h-5zM433 49h17v1h-17zM440 50h19v1h-19z"/>
<path fill="#646464" d="M272 0h98v1h-98zM2 1h40v1h-40zM313 1h34v1h-34zM351 1h6v1h-6zM11 2h58v1h-58zM17 3h17v1h-17zM285 4h38v1h-38zM294 5h13v1h-13zM321 5h4v1h-4zM299 6h18v1h-18zM387 6h16v1h-16zM98 7h14v1h-14zM272 8h26v1h-26zM288 9h7v1h-7zM324 10h4v1h-4zM249 12h10v1h-10zM286 14h13v1h-13zM257 16h12v1h-12zM266 17h10v1h-10zM343 20h30v1h-30zM246 21h5v1h-5zM364 21h27v1h-27zM386 22h72v1h-72zM395 23h58v1h-58zM395 24h23v1h-23zM126 29h2v1h-2zM238 29h21v1h-21zM126 30h13v1h-13zM239 30h5v1h-5zM240 31h15v1h-15zM298 31h5v1h-5zM463 31h4v1h-4zM313 32h30v1h-30zM457 34h9v1h-9zM436 38h31v1h-31zM441 39h7v1h-7zM216 40h11v1h-11zM447 40h3v1h-3zM156 41h16v1h-16zM296 44h4v1h-4zM253 48h8v1h-8zM457 48h24v1h-24zM75 49h19v1h-19zM457 49h5v1h-5zM86 50h14v1h-14zM329 50h36v1h-36zM50 51h25v1h-25zM343 51h14v1h-14z"/>
<rect x="257" y="0" width="220" height="1" fill="#649c64"/>
<rect x="257" y="1" width="220" height="1" fill="#9c649c"/>
<rect x="257" y="2" width="220" height="1" fill="#9c9c64"/>
<rect x="257" y="3" width="220" height="1" fill="#9c9c64"/>
<rect x="257" y="4" width="220" height="1" fill="#9c9c64"/>
<rect x="257" y="5" width="220" height="1" fill="#9c9c64"/>
<rect x="257" y="6" width="220" height="1" fill="#9c9c64"/>
<rect x="257" y="7" width="220" height="1" fill="#9c9c9c"/>
<rect x="257" y="8" width="220" height="1" fill="#9c6464"/>
<rect x="257" y="9" width="220" height="1" fill="#9c649c"/>
<rect x="257" y="10" width="220" height="1" fill="#9c6464"/>
<rect x="257" y="11" width="220" height="1" fill="#649c9c"/>
<rect x="257" y="12" width="220" height="1" fill="#9c9c64"/>
<rect x="257" y="13" width="220" height="1" fill="#9c9c64"/>
<rect x="240" y="0" width="17" height="11" fill="#7a80a8"/>
<rect x="0" y="0" width="150" height="2" fill="#9c6464"/>
<rect x="0" y="2" width="150" height="4" fill="#9c649c"/>
<rect x="4" y="14" width="68" height="8" fill="#9c9c64"/>
<rect x="30" y="16" width="25" height="1" fill="#64649c"/>
<rect x="40" y="20" width="20" height="1" fill="#64649c"/>
<rect x="3" y="7" width="1" height="39" fill="#000080"/>
</svg>
<div class="t n" style="left:6px;top:13px;width:48px"><span>11:38:24</span></div>
<div class="t n" style="left:132px;top:13px;width:216px"><span>Waterloo Information Systems Limited</span></div>
<div class="t n" style="left:408px;top:13px;width:66px"><span>19 SEP 2001</span></div>
<div class="t n" style="left:396px;top:26px;width:78px"><span>Clerk: A WISL</span></div>
<div class="t n" style="left:174px;top:39px;width:126px"><span>Enquete de Taux - RRI</span></div>
<div class="t w" style="left:6px;top:52px;width:12px"><span>1.</span></div>
<div class="t c" style="left:24px;top:52px;width:60px"><span>Division :</span></div>
<div class="t f" style="left:84px;top:52px;width:378px"><span>1 Eddison Jones Concrete 4445 Fairview Street Toronto ON       </span></div>
<div class="t w" style="left:6px;top:65px;width:12px"><span>2.</span></div>
<div class="t c" style="left:24px;top:65px;width:54px"><span>Livreur :</span></div>
<div class="t fc" style="left:78px;top:65px;width:6px"><span> </span></div>
<div class="t w" style="left:330px;top:65px;width:114px"><span>3. Niveau de serv.:</span></div>
<div class="t w" style="left:6px;top:78px;width:72px"><span>4. Camion  :</span></div>
<div class="t w" style="left:246px;top:78px;width:54px"><span>5. Date :</span></div>
<div class="t f" style="left:300px;top:78px;width:66px"><span>19 SEP 2001</span></div>
<div class="t w" style="left:378px;top:78px;width:48px"><span>6. Ech.:</span></div>
<div class="t f" style="left:426px;top:78px;width:36px"><span>1.4098</span></div>
<div class="t w" style="left:6px;top:91px;width:54px"><span>7. Compte</span></div>
<div class="t f" style="left:60px;top:91px;width:6px"><span>3</span></div>
<div class="t w" style="left:96px;top:91px;width:12px"><span>8.</span></div>
<div class="t c" style="left:114px;top:91px;width:30px"><span>Poids</span></div>
<div class="t f" style="left:156px;top:91px;width:18px"><span>345</span></div>
<div class="t w" style="left:198px;top:91px;width:54px"><span>9. Volume</span></div>
<div class="t w" style="left:294px;top:91px;width:54px"><span>10. Pieds</span></div>
<div class="t w" style="left:390px;top:91px;width:60px"><span>11. Hours:</span></div>
<div class="t w" style="left:0px;top:104px;width:78px"><span>12. Commodite</span></div>
<div class="t w" style="left:228px;top:104px;width:66px"><span>13. Classe:</span></div>
<div class="t w" style="left:324px;top:104px;width:18px"><span>14.</span></div>
<div class="t c" style="left:348px;top:104px;width:48px"><span>Ind. TL:</span></div>
<div class="t f" style="left:396px;top:104px;width:6px"><span>N</span></div>
<div class="t w" style="left:414px;top:104px;width:42px"><span>15. IV:</span></div>
<div class="t w" style="left:0px;top:117px;width:18px"><span>16.</span></div>
<div class="t c" style="left:24px;top:117px;width:96px"><span>Point d&#x27;Origine:</span></div>
<div class="t f" style="left:120px;top:117px;width:78px"><span>Pointe-Claire</span></div>
<div class="t w" style="left:276px;top:117px;width:18px"><span>17.</span></div>
<div class="t c" style="left:300px;top:117px;width:30px"><span>Prov:</span></div>
<div class="t f" style="left:330px;top:117px;width:12px"><span>PQ</span></div>
<div class="t w" style="left:0px;top:130px;width:18px"><span>18.</span></div>
<div class="t c" style="left:24px;top:130px;width:66px"><span>Destination</span></div>
<div class="t c" style="left:114px;top:130px;width:6px"><span>:</span></div>
<div class="t f" style="left:120px;top:130px;width:30px"><span>Anjou</span></div>
<div class="t w" style="left:276px;top:130px;width:18px"><span>19.</span></div>
<div class="t c" style="left:300px;top:130px;width:30px"><span>Prov:</span></div>
<div class="t f" style="left:330px;top:130px;width:12px"><span>PQ</span></div>
<div class="t w" style="left:0px;top:143px;width:90px"><span>20. Inter. City</span></div>
<div class="t w" style="left:114px;top:143px;width:6px"><span>:</span></div>
<div class="t w" style="left:276px;top:143px;width:54px"><span>21. Prov:</span></div>
<div class="t w" style="left:360px;top:143px;width:18px"><span>22.</span></div>
<div class="t c" style="left:384px;top:143px;width:72px"><span>Points Add :</span></div>
<div class="t f" style="left:456px;top:143px;width:6px"><span>N</span></div>
<div class="t c" style="left:6px;top:286px;width:240px"><span>xxxxxxxxxxxxxxxxxxxxxxxxxxxxxxxxxxxxxxxx</span></div>
<div class="t c" style="left:252px;top:286px;width:168px"><span>2. la compagnie de livraison</span></div>
<div class="t f" style="left:0px;top:313px;width:54px"><span style="transform:translate(0.8px,-0.5px) scaleX(0.74066)">         </span></div>
<div class="t f" style="left:60px;top:313px;width:54px"><span style="transform:translate(0.8px,-0.5px) scaleX(0.74066)"> G       </span></div>
<div class="t f" style="left:120px;top:313px;width:54px"><span style="transform:translate(0.8px,-0.5px) scaleX(0.74066)">SRT      </span></div>
<div class="t f" style="left:180px;top:313px;width:54px"><span style="transform:translate(0.8px,-0.5px) scaleX(0.74066)"> 4       </span></div>
<div class="t f" style="left:246px;top:313px;width:54px"><span style="transform:translate(0.8px,-0.5px) scaleX(0.74066)"> 0       </span></div>
<div class="t f" style="left:306px;top:313px;width:54px"><span style="transform:translate(0.8px,-0.5px) scaleX(0.74066)"> U       </span></div>
<div class="a" style="left:79px;top:66.0px;width:1px;height:2px;background:#000080"></div>
<div class="a" style="left:80px;top:68.5px;width:1px;height:2px;background:#000080"></div>
<div class="a" style="left:81px;top:71.0px;width:1px;height:2px;background:#000080"></div>
<div class="a" style="left:82px;top:73.5px;width:1px;height:2px;background:#000080"></div>
<div class="a" style="left:83px;top:76.0px;width:1px;height:2px;background:#000080"></div>
<div class="a" style="left:1px;top:314.0px;width:1px;height:2px;background:#000080"></div>
<div class="a" style="left:2px;top:316.5px;width:1px;height:2px;background:#000080"></div>
<div class="a" style="left:3px;top:319.0px;width:1px;height:2px;background:#000080"></div>
<div class="a" style="left:4px;top:321.5px;width:1px;height:2px;background:#000080"></div>
<div class="a" style="left:5px;top:324.0px;width:1px;height:2px;background:#000080"></div>
<div class="a" style="left:61px;top:314.0px;width:1px;height:2px;background:#000080"></div>
<div class="a" style="left:62px;top:316.5px;width:1px;height:2px;background:#000080"></div>
<div class="a" style="left:63px;top:319.0px;width:1px;height:2px;background:#000080"></div>
<div class="a" style="left:64px;top:321.5px;width:1px;height:2px;background:#000080"></div>
<div class="a" style="left:65px;top:324.0px;width:1px;height:2px;background:#000080"></div>
<div class="a" style="left:181px;top:314.0px;width:1px;height:2px;background:#000080"></div>
<div class="a" style="left:182px;top:316.5px;width:1px;height:2px;background:#000080"></div>
<div class="a" style="left:183px;top:319.0px;width:1px;height:2px;background:#000080"></div>
<div class="a" style="left:184px;top:321.5px;width:1px;height:2px;background:#000080"></div>
<div class="a" style="left:185px;top:324.0px;width:1px;height:2px;background:#000080"></div>
<div class="a" style="left:247px;top:314.0px;width:1px;height:2px;background:#000080"></div>
<div class="a" style="left:248px;top:316.5px;width:1px;height:2px;background:#000080"></div>
<div class="a" style="left:249px;top:319.0px;width:1px;height:2px;background:#000080"></div>
<div class="a" style="left:250px;top:321.5px;width:1px;height:2px;background:#000080"></div>
<div class="a" style="left:251px;top:324.0px;width:1px;height:2px;background:#000080"></div>
<div class="a" style="left:307px;top:314.0px;width:1px;height:2px;background:#000080"></div>
<div class="a" style="left:308px;top:316.5px;width:1px;height:2px;background:#000080"></div>
<div class="a" style="left:309px;top:319.0px;width:1px;height:2px;background:#000080"></div>
<div class="a" style="left:310px;top:321.5px;width:1px;height:2px;background:#000080"></div>
<div class="a" style="left:311px;top:324.0px;width:1px;height:2px;background:#000080"></div>
</div>
<!-- right frame & scrollbar -->

<svg class="a" style="left:545px;top:79px" width="7" height="7" shape-rendering="crispEdges"><rect width="7" height="7" fill="#000"/><rect width="6" height="6" fill="#fff"/><rect x="1" y="1" width="5" height="5" fill="#c0c0c0"/><rect x="3" y="3" width="1" height="1" fill="#000"/><rect x="2" y="4" width="3" height="1" fill="#000"/></svg>
<div class="a" style="left:545px;top:86px;width:8px;height:152px;background:#fff"></div>
<div class="a" style="left:552px;top:402px;width:1px;height:15px;background:#000"></div>
<svg class="a" style="left:545px;top:409px" width="7" height="8" shape-rendering="crispEdges"><rect width="7" height="8" fill="#000"/><rect width="6" height="7" fill="#fff"/><rect x="1" y="1" width="5" height="6" fill="#c0c0c0"/><rect x="2" y="3" width="3" height="1" fill="#000"/><rect x="3" y="4" width="1" height="1" fill="#000"/></svg>
<!-- taskbar -->
<div class="a" style="left:40px;top:417px;width:513px;height:13px;background:#c0c0c0"></div>
<svg class="a" style="left:40px;top:417px" width="513" height="13" shape-rendering="crispEdges">
<rect x="0" y="0" width="1" height="13" fill="#fff"/>
<g fill="#fff"><rect x="56" y="1" width="1" height="11"/><rect x="91" y="1" width="1" height="11"/><rect x="128" y="1" width="1" height="11"/><rect x="155" y="1" width="1" height="11"/><rect x="200" y="1" width="1" height="11"/><rect x="234" y="1" width="1" height="11"/></g>
<g fill="#808080"><rect x="55" y="1" width="1" height="11"/><rect x="90" y="1" width="1" height="11"/><rect x="127" y="1" width="1" height="11"/><rect x="154" y="1" width="1" height="11"/><rect x="199" y="1" width="1" height="11"/><rect x="233" y="1" width="1" height="11"/></g>
<!-- icon1 monitor -->
<rect x="15" y="2" width="6" height="5" fill="#000080"/><rect x="16" y="3" width="4" height="2" fill="#fff"/><rect x="16" y="7" width="4" height="1" fill="#808080"/>
<!-- icon2 -->
<rect x="59" y="2" width="6" height="5" fill="#000080"/><rect x="60" y="4" width="4" height="2" fill="#fff"/><rect x="60" y="7" width="5" height="1" fill="#404040"/>
<!-- icon3 -->
<rect x="95" y="2" width="6" height="6" fill="#000"/><rect x="96" y="3" width="4" height="4" fill="#0000ff"/><rect x="97" y="8" width="3" height="2" fill="#808000"/>
<!-- icon4 printer -->
<rect x="132" y="4" width="8" height="4" fill="#000"/><rect x="134" y="2" width="4" height="3" fill="#fff"/><rect x="133" y="5" width="6" height="2" fill="#fff"/>
<!-- icon5 -->
<path d="M159 3h7v5h-7z" fill="#ffff00"/><path d="M159 3l7 5M160 6h4" stroke="#ff0000" stroke-width="1.3" shape-rendering="auto"/>
<!-- icon6 -->
<path d="M204 8l4-5h2v5z" fill="#808080"/><rect x="204" y="8" width="6" height="2" fill="#404040"/>
<!-- icon7 -->
<path d="M239 2l2 2l-2 3l2 2" fill="none" stroke="#ff0000" stroke-width="1" shape-rendering="auto"/>
</svg>
<div class="tt" style="left:66px">9 S.</div>
<div class="tt" style="left:108px">33.24 1</div>
<div class="tt" style="left:145px">www 60</div>
<div class="tt" style="left:184px">dis</div>
<div class="tt" style="left:209px">Capture DN</div>
<div class="tt" style="left:255px">Telnet</div>
<div class="tt" style="left:287px">connected to 44a 05</div>

<!-- footer -->
<div class="stripes" style="left:11px;width:446px"></div>
<div class="stripes" style="left:511.7px;width:48px"></div>
<div class="a" style="left:464.5px;top:429px;font-size:16px;line-height:17px;color:#6f6f6f;letter-spacing:-0.3px;-webkit-text-stroke:0.6px #6f6f6f">WISL</div>
<div class="a" style="left:569px;top:428px;font-size:15px;line-height:17px;font-weight:bold;color:#6f6f6f;letter-spacing:-1px">14</div>
<!-- title -->
<div class="a" style="left:25px;top:20px;width:223px;height:31px;background:#939393"></div>
<div class="a" style="left:20px;top:15px;width:223px;height:31px;background:#d0d0d0"></div>
<div class="a" style="left:50px;top:14px;height:31px;line-height:31px;font-size:21px;color:#000;transform:scaleX(0.962);transform-origin:0 0;white-space:pre">OL Demonstration</div>
<!-- callout -->
<div class="a" style="left:228px;top:278px;width:292px;height:60px;border-radius:6px;background:#800000"></div>
<div class="a" style="left:226px;top:276px;width:292px;height:60px;border-radius:6px;background:#ffff00"></div>
<div class="a" style="left:233px;top:285px;width:290px;font-size:12px;line-height:14px;color:#000;letter-spacing:-0.15px;white-space:pre"> Sample data has been entered and a backslash has
been entered beside the carrier attribute to invoke
the translated help text.</div>
<!-- button -->
<div class="a" style="left:405px;top:385px;width:146px;height:21px;background:linear-gradient(to right,#3e3050 0%,#54426a 30%,#a080c8 65%,#d4a0fc 100%);border:1px solid #c8a0f0"></div>
<div class="a" style="left:405px;top:385px;width:146px;height:21px;line-height:21px;text-align:center;font-size:13px;font-weight:bold;color:#fff;letter-spacing:-0.6px">Left Click to Continue</div>
</body></html>
